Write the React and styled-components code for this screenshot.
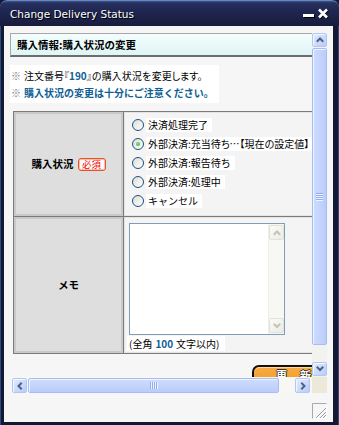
import React from 'react';
import styled, { createGlobalStyle } from 'styled-components';

const GlobalStyle = createGlobalStyle`
  html, body { margin: 0; padding: 0; }
  body { background: #141933; width: 339px; height: 425px; overflow: hidden; }
  * { box-sizing: border-box; }
`;

const Window = styled.div`
  width: 339px;
  height: 425px;
  display: flex;
  flex-direction: column;
  background: #141933;
  border-radius: 7px 7px 0 0;
  box-shadow: inset 1px 0 0 #2c4a82, inset -1px 0 0 #2c4a82;
  font-family: "Noto Sans CJK JP", sans-serif;
  overflow: hidden;
`;

const TitleBar = styled.div`
  flex: none;
  height: 26px;
  display: flex;
  align-items: center;
  padding: 0 10px;
  border-radius: 7px 7px 0 0;
  border-top: 1px solid #6a88c0;
  background: linear-gradient(#3e5690 0px, #27315f 2px, #1f2651 10px, #171c3b 26px);
`;

const Title = styled.span`
  flex: 1;
  font-family: "DejaVu Sans", sans-serif;
  font-size: 10.5px;
  color: #fff;
  text-shadow: 1px 1px 0 #000;
  line-height: 14px;
`;

const WinButtons = styled.div`
  display: flex;
  align-items: center;
  gap: 3px;
`;

const MinBar = styled.span`
  display: block;
  width: 11px;
  height: 3px;
  margin-top: 3px;
  background: #fff;
  box-shadow: 1px 1px 0 #000;
`;

const Body = styled.div`
  flex: 1;
  display: flex;
  flex-direction: column;
  margin: 0 6px 3px 4px;
  padding: 7px 0 0 6px;
  background: #f6f6f6;
`;

const ScrollFrame = styled.div`
  display: grid;
  grid-template-columns: 302px 15px;
  grid-template-rows: 344px 16px;
`;

const Viewport = styled.div`
  overflow: hidden;
  background: #f6f6f6;
`;

const Content = styled.div`
  width: 330px;
  display: flex;
  flex-direction: column;
  align-items: flex-start;
`;

const SectionHeader = styled.div`
  width: 330px;
  height: 24px;
  padding-left: 6px;
  display: flex;
  align-items: center;
  border-top: 1px solid #a8a8a8;
  border-left: 1px solid #a8a8a8;
  border-bottom: 2px solid #6c6c6c;
  background: linear-gradient(#f4fdfd, #def5f5);
  font-size: 10.5px;
  font-weight: 700;
  color: #000;
  line-height: 14px;
`;

const Notes = styled.div`
  margin-top: 8px;
  padding: 2px 5px 2px 1px;
  background: #fff;
  display: flex;
  flex-direction: column;
`;

const NoteLine = styled.div`
  height: 17px;
  line-height: 17px;
  font-size: 10px;
  color: #000;
  white-space: nowrap;
`;

const Mark = styled.span`
  color: #7a7a7a;
  font-weight: 700;
  margin-right: 3px;
`;

const Blue = styled.span`
  color: #0f5f94;
  font-weight: 700;
  margin: ${p => p.$gap || 0};
`;

const Narrow = styled.span`
  font-feature-settings: "palt";
`;

const FormTable = styled.div`
  margin: 8px 0 0 3px;
  width: 299px;
  display: grid;
  grid-template-columns: 110px 1fr;
  grid-template-rows: 104px 137px;
  border: 1px solid #7b7b7b;
`;

const HeadCell = styled.div`
  background: #dedede;
  border-right: 1px solid #7b7b7b;
  border-top: ${p => (p.$first ? 'none' : '1px solid #7b7b7b')};
  box-shadow: inset 0 0 0 2px #c9c9c9;
  display: flex;
  align-items: center;
  justify-content: center;
  gap: 4px;
  font-size: 10.5px;
  font-weight: 700;
  color: #000;
  line-height: 14px;
`;

const DataCell = styled.div`
  background: #f4f4f4;
  border-top: ${p => (p.$first ? 'none' : '1px solid #7b7b7b')};
  box-shadow: inset 0 0 0 1px #e4e4e4;
  display: flex;
  flex-direction: column;
  align-items: flex-start;
  padding: ${p => p.$pad};
`;

const Required = styled.span`
  display: inline-flex;
  align-items: center;
  justify-content: center;
  width: 28px;
  height: 13px;
  background: #fff;
  border: 1px solid #e8502a;
  border-radius: 3px;
  box-shadow: inset 0 0 0 1px #f8c0a0;
  color: #f00000;
  font-size: 9.5px;
  font-weight: 400;
  line-height: 11px;
`;

const RadioRow = styled.label`
  height: 19px;
  display: flex;
  align-items: center;
`;

const RadioCircle = styled.span`
  position: relative;
  width: 12px;
  height: 12px;
  border-radius: 50%;
  border: 1px solid #1c5180;
  background: linear-gradient(135deg, #dcdcd7, #ffffff);
  flex: none;
  &::after {
    content: '';
    display: ${p => (p.$checked ? 'block' : 'none')};
    position: absolute;
    left: 3px;
    top: 3px;
    width: 4px;
    height: 4px;
    border-radius: 50%;
    background: radial-gradient(circle at 40% 40%, #8ee48e, #21a121);
  }
`;

const RadioLabel = styled.span`
  margin-left: 2px;
  padding: 0 4px 0 2px;
  background: #fff;
  font-size: 10px;
  line-height: 14px;
  color: #000;
  white-space: nowrap;
  font-feature-settings: ${p => (p.$tight ? '"palt"' : 'normal')};
`;

const MemoBox = styled.div`
  margin-left: 2px;
  width: 156px;
  height: 112px;
  border: 1px solid #7f9db9;
  background: #fff;
  display: flex;
`;

const MemoInput = styled.textarea`
  flex: 1;
  border: none;
  outline: none;
  resize: none;
  overflow: hidden;
  background: #fff;
  margin: 0;
  padding: 2px;
  font-family: "Noto Sans CJK JP", sans-serif;
  font-size: 10px;
`;

const DisabledBar = styled.div`
  width: 16px;
  padding: 1px 1px 1px 0;
  display: flex;
  flex-direction: column;
  justify-content: space-between;
  background: #f7f7f4;
  border-left: 1px solid #efefea;
`;

const DisabledBtn = styled.div`
  width: 15px;
  height: 15px;
  border: 1px solid #e2e1d8;
  border-radius: 2px;
  background: linear-gradient(135deg, #fbfbf8, #ecebe4);
  display: flex;
  align-items: center;
  justify-content: center;
`;

const MemoNote = styled.div`
  margin-top: 1px;
  padding: 0 6px 0 2px;
  background: #fff;
  font-size: 10px;
  line-height: 15px;
  color: #000;
  white-space: nowrap;
`;

const UpdateButton = styled.button`
  margin: 11px 0 0 242px;
  width: 84px;
  height: 26px;
  border: 2px solid #111;
  border-radius: 7px;
  background: linear-gradient(#f7ac44, #f29420);
  box-shadow: inset 0 1px 0 #ffd89a;
  padding: 1px 0 0 0;
  display: flex;
  justify-content: center;
  align-items: flex-start;
  font-family: "Noto Sans CJK JP", sans-serif;
  font-size: 11px;
  font-weight: 700;
  line-height: 14px;
  color: #fff;
  text-shadow: -1px 0 #333, 1px 0 #333, 0 -1px #333, 0 1px #333;
  letter-spacing: 1px;
`;

const VScroll = styled.div`
  background: #f2f2ee;
  display: flex;
  flex-direction: column;
  padding-bottom: 1px;
`;

const HScroll = styled.div`
  background: #f7f7f4;
  display: flex;
  align-items: flex-start;
  padding: 1px 2px 0 2px;
`;

const Corner = styled.div`
  background: #ece9d8;
`;

const ArrowBtn = styled.div`
  flex: none;
  width: ${p => p.$w}px;
  height: ${p => p.$h}px;
  border: 1px solid #b2c6f5;
  border-radius: 2px;
  background: linear-gradient(135deg, #e2eafe, #b8ccfa);
  box-shadow: inset 1px 1px 0 #f4f7ff;
  display: flex;
  align-items: center;
  justify-content: center;
`;

const VThumb = styled.div`
  margin-top: 1px;
  height: 297px;
  width: 15px;
  border: 1px solid #a7bcf2;
  border-radius: 2px;
  background: linear-gradient(to right, #cfdcfd, #b9ccfb);
  box-shadow: inset 1px 1px 0 #eef3ff;
  display: flex;
  align-items: center;
  justify-content: center;
`;

const HThumb = styled.div`
  margin-left: 1px;
  width: 251px;
  height: 15px;
  border: 1px solid #a7bcf2;
  border-radius: 2px;
  background: linear-gradient(#cfdcfd, #b9ccfb);
  box-shadow: inset 1px 1px 0 #eef3ff;
  display: flex;
  align-items: center;
  justify-content: center;
`;

const Track = styled.div`
  flex: 1;
`;

const GripLines = styled.div`
  display: flex;
  flex-direction: ${p => (p.$vertical ? 'column' : 'row')};
  gap: 1px;
  & > span {
    display: block;
    width: ${p => (p.$vertical ? '7px' : '1px')};
    height: ${p => (p.$vertical ? '1px' : '7px')};
    background: #8caef0;
    box-shadow: ${p => (p.$vertical ? '0 1px 0 #eef4ff' : '1px 0 0 #eef4ff')};
  }
`;

const Footer = styled.div`
  display: flex;
  justify-content: flex-end;
  padding: 10px 6px 0 0;
`;

const Chevron = ({ dir, color = '#4d6185' }) => {
  const paths = {
    up: 'M1.5 5 L4 2.5 L6.5 5',
    down: 'M1.5 2.5 L4 5 L6.5 2.5',
    left: 'M5 1.5 L2.5 4 L5 6.5',
    right: 'M3 1.5 L5.5 4 L3 6.5',
  };
  return (
    <svg width="8" height="8" viewBox="0 0 8 8">
      <path d={paths[dir]} fill="none" stroke={color} strokeWidth="2" strokeLinecap="square" />
    </svg>
  );
};

const Grip = ({ vertical }) => (
  <GripLines $vertical={vertical}>
    <span /><span /><span /><span />
  </GripLines>
);

const radios = [
  { label: '決済処理完了' },
  { label: '外部決済:充当待ち…【現在の設定値】', checked: true, tight: true },
  { label: '外部決済:報告待ち' },
  { label: '外部決済:処理中' },
  { label: 'キャンセル' },
];

export default function App() {
  return (
    <>
      <GlobalStyle />
      <Window>
        <TitleBar>
          <Title>Change Delivery Status</Title>
          <WinButtons>
            <MinBar />
            <svg width="12" height="11" viewBox="0 0 12 11">
              <path d="M2 1.5 L10 9.5 M10 1.5 L2 9.5" stroke="#000" strokeWidth="2.6" transform="translate(0.8 0.8)" />
              <path d="M2 1.5 L10 9.5 M10 1.5 L2 9.5" stroke="#fff" strokeWidth="2.6" />
            </svg>
          </WinButtons>
        </TitleBar>
        <Body>
          <ScrollFrame>
            <Viewport>
              <Content>
                <SectionHeader>購入情報:購入状況の変更</SectionHeader>
                <Notes>
                  <NoteLine>
                    <Mark>※</Mark>注文番号<Narrow>『<Blue>190</Blue>』</Narrow>の購入状況を変更<Narrow>します。</Narrow>
                  </NoteLine>
                  <NoteLine>
                    <Mark>※</Mark><Blue>購入状況の変更は十分にご注意ください。</Blue>
                  </NoteLine>
                </Notes>
                <FormTable>
                  <HeadCell $first>
                    購入状況<Required>必須</Required>
                  </HeadCell>
                  <DataCell $first $pad="3px 0 0 8px">
                    {radios.map(r => (
                      <RadioRow key={r.label}>
                        <RadioCircle $checked={r.checked} />
                        <RadioLabel $tight={r.tight}>{r.label}</RadioLabel>
                      </RadioRow>
                    ))}
                  </DataCell>
                  <HeadCell>メモ</HeadCell>
                  <DataCell $pad="6px 0 0 3px">
                    <MemoBox>
                      <MemoInput defaultValue="" />
                      <DisabledBar>
                        <DisabledBtn><Chevron dir="up" color="#c4c3ba" /></DisabledBtn>
                        <DisabledBtn><Chevron dir="down" color="#c4c3ba" /></DisabledBtn>
                      </DisabledBar>
                    </MemoBox>
                    <MemoNote>(全角<Blue $gap="0 3px">100</Blue>文字以内)</MemoNote>
                  </DataCell>
                </FormTable>
                <UpdateButton>更　新</UpdateButton>
              </Content>
            </Viewport>
            <VScroll>
              <ArrowBtn $w={15} $h={14}><Chevron dir="up" /></ArrowBtn>
              <VThumb><Grip vertical /></VThumb>
              <Track />
              <ArrowBtn $w={15} $h={14}><Chevron dir="down" /></ArrowBtn>
            </VScroll>
            <HScroll>
              <ArrowBtn $w={15} $h={15}><Chevron dir="left" /></ArrowBtn>
              <HThumb><Grip /></HThumb>
              <Track />
              <ArrowBtn $w={15} $h={15}><Chevron dir="right" /></ArrowBtn>
            </HScroll>
            <Corner />
          </ScrollFrame>
          <Footer>
            <svg width="15" height="16" viewBox="0 0 15 16">
              <path d="M0.5 16 V0.5 H15" fill="none" stroke="#a9a9a9" />
              <path d="M14.5 0.5 V15.5 H0.5" fill="none" stroke="#ffffff" />
              <path d="M14 5 L4 15 M14 9 L8 15 M14 12 L11 15" stroke="#9a9a9a" strokeWidth="1" />
              <path d="M14 6 L5 15 M14 10 L9 15" stroke="#ffffff" strokeWidth="1" />
            </svg>
          </Footer>
        </Body>
      </Window>
    </>
  );
}
